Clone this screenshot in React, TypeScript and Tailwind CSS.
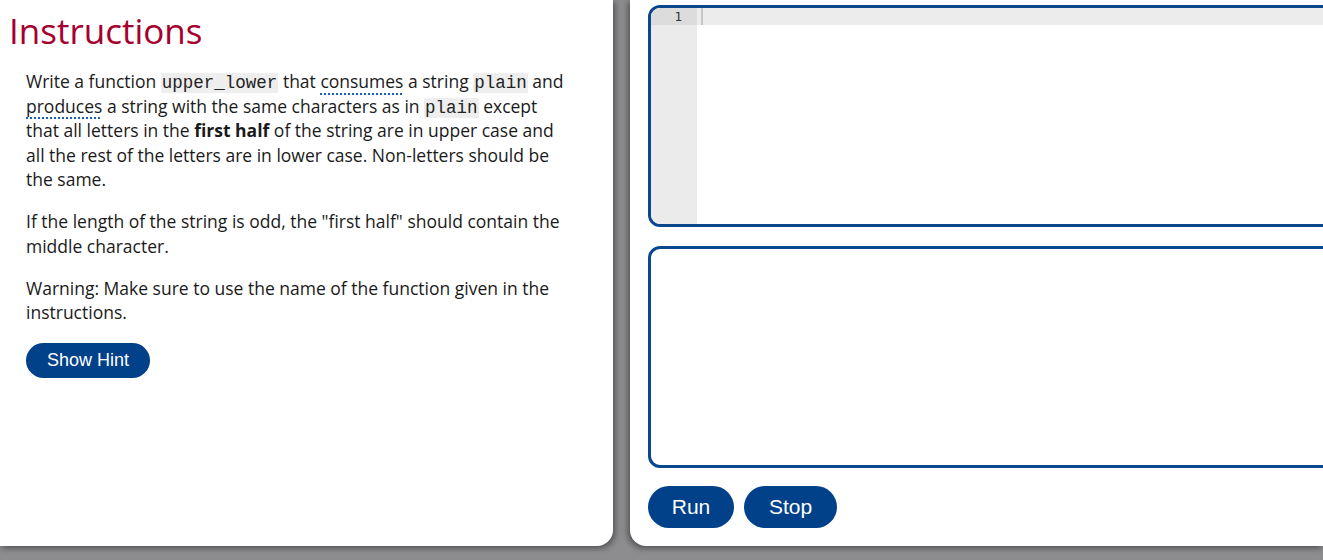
import React from "react";

const sans = { fontFamily: '"Open Sans", "Noto Sans", sans-serif' };

function Code({ children }: { children: React.ReactNode }) {
  return (
    <code className="bg-[#eeeeee] px-[1px] text-[17.5px] leading-none text-[#222]" style={{ fontFamily: '"Liberation Mono", "Courier New", monospace' }}>
      {children}
    </code>
  );
}

function Term({ children }: { children: React.ReactNode }) {
  return (
    <span className="underline decoration-dotted decoration-[#1a5fb4] decoration-2 underline-offset-[5px]">{children}</span>
  );
}

export default function App() {
  return (
    <div className="w-[1323px] h-[560px] bg-[#8d8d8f] flex overflow-hidden">
      <div className="w-[613px] h-[546px] shrink-0 bg-white rounded-br-[16px] shadow-[2px_2px_6px_rgba(0,0,0,0.45)] pt-[9px] pl-[9px]" style={sans}>
        <h1 className="text-[35px] leading-[44px] text-[#a6002f]">Instructions</h1>
        <div className="ml-[17px] w-[548px] pt-[16px] text-[17.5px] leading-[24.5px] text-[#1a1a1a]">
          <p>
            Write a function <Code>upper_lower</Code> that <Term>consumes</Term> a string <Code>plain</Code> and{" "}
            <Term>produces</Term> a string with the same characters as in <Code>plain</Code> except that all letters in the{" "}
            <b>first half</b> of the string are in upper case and all the rest of the letters are in lower case. Non-letters should be the same.
          </p>
          <p className="mt-[17.5px]">If the length of the string is odd, the "first half" should contain the middle character.</p>
          <p className="mt-[17.5px]">Warning: Make sure to use the name of the function given in the instructions.</p>
          <button
            className="mt-[18px] h-[35px] px-[21px] rounded-full bg-[#00418a] text-white text-[18px]"
            style={{ fontFamily: '"Liberation Sans", Arial, sans-serif' }}
          >
            Show Hint
          </button>
        </div>
      </div>
      <div className="ml-[17px] flex-1 h-[546px] bg-white rounded-bl-[16px] shadow-[-2px_2px_6px_rgba(0,0,0,0.45)] overflow-hidden pl-[18px] pt-[5px]">
        <div className="w-[720px] h-[222px] border-[3px] border-[#0b478c] rounded-[12px] overflow-hidden flex">
          <div className="w-[46px] h-full bg-[#ebebeb] flex flex-col">
            <div className="h-[17px] bg-[#dcdcdc] text-right pr-[15px] text-[12.5px] leading-[17px] text-[#333]" style={{ fontFamily: '"DejaVu Sans Mono", monospace' }}>
              1
            </div>
          </div>
          <div className="flex-1 flex flex-col">
            <div className="h-[17px] bg-[#ececec] flex">
              <div className="ml-[4px] w-[2px] h-[17px] bg-[#c8c8c8]" />
            </div>
          </div>
        </div>
        <div className="mt-[19px] w-[720px] h-[222px] border-[3px] border-[#0b478c] rounded-[12px]" />
        <div className="mt-[18px] flex gap-[10px]" style={{ fontFamily: '"Liberation Sans", Arial, sans-serif' }}>
          <button className="h-[42px] w-[86px] rounded-full bg-[#00418a] text-white text-[21px]">Run</button>
          <button className="h-[42px] w-[93px] rounded-full bg-[#00418a] text-white text-[21px]">Stop</button>
        </div>
      </div>
    </div>
  );
}
